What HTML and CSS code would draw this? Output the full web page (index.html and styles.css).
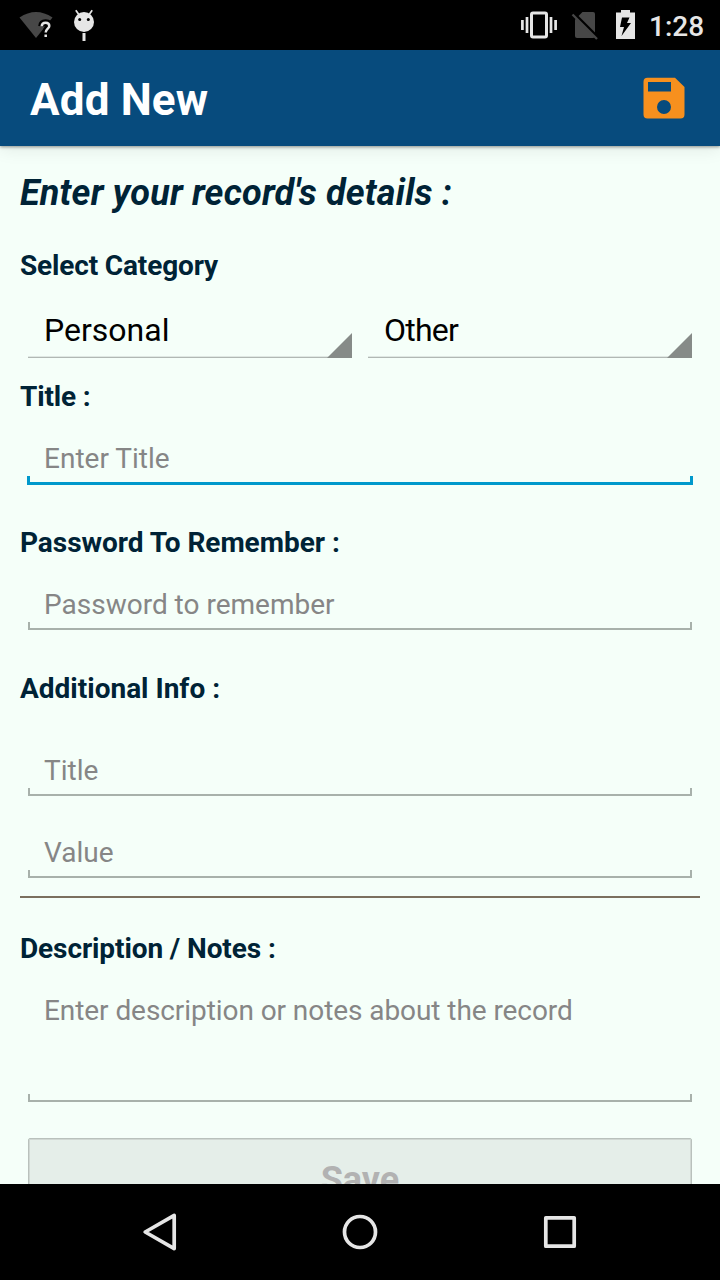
FILE: index.html
```html
<!DOCTYPE html>
<html lang="en">
<head>
<meta charset="utf-8">
<title>Add New</title>
<link rel="stylesheet" href="styles.css">
</head>
<body>
<div class="screen">
  <header class="status">
    <svg class="status-left" width="110" height="50" viewBox="0 0 110 50">
      <path fill="#474747" d="M36 38 19.500 17.500Q36 6.500 52.500 17.500Z"/>
      <path fill="none" stroke="#000" stroke-width="7" d="M41.700 26.300q.2-3.600 3.900-3.600 3.700 0 3.700 3.300c0 2.500-3.600 3-3.600 6.500M45.700 34.500v2.500"/>
      <path fill="none" stroke="#e6e6e6" stroke-width="2.500" d="M41.700 26.300q.2-3.600 3.900-3.600 3.700 0 3.700 3.300c0 2.500-3.600 3-3.600 6.500M45.700 34.500v2.500"/>
      <circle cx="84" cy="22" r="10" fill="#e6e6e6"/>
      <path stroke="#e6e6e6" stroke-width="1.700" d="m75.800 10.300 3.200 4.500M92.200 10.300l-3.200 4.500"/>
      <path stroke="#e6e6e6" stroke-width="3" d="M84 33v8"/>
      <circle cx="79.700" cy="19.500" r="1.500"/><circle cx="88.300" cy="19.500" r="1.500"/>
    </svg>
    <svg class="status-right" width="125" height="50" viewBox="515 0 125 50">
      <rect x="531.500" y="13" width="15" height="24" rx="1.500" fill="none" stroke="#e6e6e6" stroke-width="3"/>
      <path stroke="#e6e6e6" stroke-width="2.700" d="M522.400 20v10M527 17v16M551 17v16M555.600 20v10"/>
      <path fill="#474747" d="M582.500 12H593q2 0 2 2v22q0 2-2 2h-16q-2 0-2-2V19.500z"/>
      <path stroke="#000" stroke-width="3" d="m574 13.500 24 24"/>
      <path stroke="#474747" stroke-width="2.300" d="m572.500 14.500 24.500 24.500"/>
      <path fill="#e6e6e6" d="M621 10h9v2.500h5V39h-19V12.500h5z"/>
      <path fill="#000" d="M622 17.500h7.500l-2.500 5.500h4L621.500 36l2.500-9h-4z"/>
    </svg>
    <span class="clock">1:28</span>
  </header>
  <div class="appbar">
    <h1 class="appbar-title">Add New</h1>
    <svg class="save-icon" width="42" height="42" viewBox="0 0 42 42">
      <path fill="#f7901e" fill-rule="evenodd" d="M4.500.7H32L41.500 10v27.500q0 4-4 4h-33q-4 0-4-4V4.700q0-4 4-4zM5 5v9.500h23V5zM21 23a7 7 0 1 0 0 14 7 7 0 0 0 0-14z"/>
    </svg>
  </div>
  <main class="form">
    <h2 class="heading">Enter your record's details :</h2>
    <div class="label label-category">Select Category</div>
    <div class="spinners">
      <div class="spinner">Personal</div>
      <div class="spinner spinner-type">Other</div>
    </div>
    <div class="label label-title">Title :</div>
    <div class="field field-focus">Enter Title</div>
    <div class="label label-password">Password To Remember :</div>
    <div class="field">Password to remember</div>
    <div class="label">Additional Info :</div>
    <div class="field field-extra">Title</div>
    <div class="field field-value">Value</div>
    <div class="divider"></div>
    <div class="label label-notes">Description / Notes :</div>
    <div class="field field-notes">Enter description or notes about the record</div>
    <div class="save-button">Save</div>
  </main>
  <nav class="navbar">
    <svg width="720" height="96" viewBox="0 0 720 96" fill="none" stroke="#e6e6e6" stroke-width="3.700" stroke-linejoin="round">
      <path d="M174.200 31.400v33.200L145.200 48z"/>
      <circle cx="360" cy="48" r="15.500"/>
      <rect x="545.800" y="33.800" width="28.400" height="28.400"/>
    </svg>
  </nav>
</div>
</body>
</html>
```
FILE: styles.css
```css
body {
  margin: 0;
  font-family: Roboto, sans-serif;
}
.screen {
  width: 720px;
  height: 1280px;
  display: flex;
  flex-direction: column;
  overflow: hidden;
  background: #f5fff9;
}
.status {
  height: 50px;
  flex: none;
  display: flex;
  background: #000;
}
.status-right {
  margin-left: auto;
}
.clock {
  width: 80px;
  box-sizing: border-box;
  padding-left: 9px;
  color: #e6e6e6;
  font-size: 28px;
  font-weight: 500;
  line-height: 54px;
}
.appbar {
  height: 96px;
  flex: none;
  box-sizing: border-box;
  padding: 0 35px 0 30px;
  display: flex;
  align-items: center;
  justify-content: space-between;
  background: #074b7d;
  box-shadow: 0 1px 3px rgba(0, 0, 0, .4), 0 4px 16px rgba(0, 0, 0, .08);
}
.appbar-title {
  margin: 3px 0 0;
  color: #fff;
  font-size: 44px;
  line-height: 52px;
  font-weight: bold;
  letter-spacing: .15px;
}
.save-icon {
  display: block;
}
.form {
  flex: 1;
  min-height: 0;
  overflow: hidden;
  padding: 26px 20px 0;
}
.heading {
  margin: 0 0 35px;
  color: #002336;
  font-size: 36px;
  line-height: 42px;
  font-style: italic;
  font-weight: bold;
  letter-spacing: .2px;
}
.label {
  color: #002336;
  font-size: 28px;
  line-height: 33px;
  font-weight: bold;
}
.label-category,
.label-title {
  letter-spacing: -.15px;
}
.label-password {
  letter-spacing: -.03px;
}
.spinners {
  display: flex;
  gap: 16px;
  margin: 29px 8px 22px;
}
.spinner {
  flex: 1;
  height: 47px;
  box-sizing: border-box;
  padding-left: 16px;
  color: #000;
  font-size: 32px;
  line-height: 38px;
  background:
    linear-gradient(135deg, transparent 49%, #868b88 51%) right bottom / 25px 25px no-repeat,
    linear-gradient(#dfe8e3 50%, #b1b8b4 50%) left bottom / 100% 2px no-repeat;
}
.spinner-type {
  letter-spacing: -.75px;
}
.field {
  --line: #a8b1ab;
  --weight: 2px;
  height: 42px;
  box-sizing: border-box;
  margin: 29px 8px 42px;
  padding-left: 16px;
  color: #868686;
  font-size: 28px;
  line-height: 33px;
  background:
    linear-gradient(var(--line), var(--line)) left bottom / 100% var(--weight) no-repeat,
    linear-gradient(var(--line), var(--line)) left bottom / var(--weight) 8px no-repeat,
    linear-gradient(var(--line), var(--line)) right bottom / var(--weight) 8px no-repeat;
}
.field-focus {
  --line: #0099cc;
  --weight: 3px;
  height: 43px;
  margin: 29px 7px 41px;
  padding-left: 17px;
  background-size: 100% 3px, 3px 9px, 3px 9px;
}
.field-extra {
  margin: 49px 8px 40px;
}
.field-value {
  margin: 0 8px 18px;
}
.divider {
  height: 2px;
  background: #7b705f;
}
.label-notes {
  margin-top: 34px;
  letter-spacing: -.1px;
}
.field-notes {
  height: 108px;
  margin-bottom: 36px;
  letter-spacing: -.07px;
}
.save-button {
  height: 96px;
  box-sizing: border-box;
  margin: 0 8px;
  padding-top: 20px;
  border: 1px solid #b9c1bc;
  border-radius: 2px;
  box-shadow: inset 0 0 0 1px #d0d8d3;
  background: #e5eee9;
  color: #b2b2b2;
  font-size: 36px;
  line-height: 42px;
  font-weight: bold;
  text-align: center;
}
.navbar {
  height: 96px;
  flex: none;
  background: #000;
}
```
